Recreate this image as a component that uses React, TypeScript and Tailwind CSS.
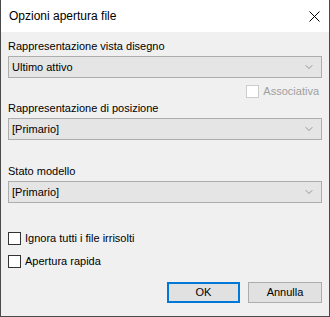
import { ChevronDown } from "lucide-react";

function Combo({ value }: { value: string }) {
  return (
    <div className="mt-[2px] flex h-[22px] items-center justify-between border border-[#adadad] bg-[#e5e5e5] pl-[3px] pr-[6px]">
      <span>{value}</span>
      <ChevronDown size={12} strokeWidth={1.2} className="text-[#606060]" />
    </div>
  );
}

function CheckBox({ label, disabled }: { label: string; disabled?: boolean }) {
  return (
    <div className="flex h-[15px] items-center">
      <div
        className={`h-[13px] w-[13px] border bg-white ${
          disabled ? "border-[#cccccc]" : "border-[#333333]"
        }`}
      />
      <span className={`ml-[4px] ${disabled ? "text-[#a0a0a0]" : ""}`}>
        {label}
      </span>
    </div>
  );
}

export default function App() {
  return (
    <div
      className="flex h-[317px] w-[330px] flex-col overflow-hidden border border-t-0 border-[#4a4a4a] bg-[#f0f0f0] text-[11px] leading-[15px] text-black"
      style={{ fontFamily: '"Liberation Sans", Arial, sans-serif' }}
    >
      {/* barra del titolo */}
      <div className="flex h-[32px] shrink-0 items-center justify-between bg-white pl-[8px] pr-[9px] text-[12px]">
        <span>Opzioni apertura file</span>
        <svg width="11" height="11" viewBox="0 0 11 11" className="text-black">
          <path d="M0.5 0.5 L10.5 10.5 M10.5 0.5 L0.5 10.5" stroke="currentColor" strokeWidth="1" />
        </svg>
      </div>

      <div className="flex flex-1 flex-col px-[7px]">
        <div className="mt-[7px]">Rappresentazione vista disegno</div>
        <Combo value="Ultimo attivo" />
        <div className="mt-[6px] flex justify-end pr-[3px]">
          <CheckBox label="Associativa" disabled />
        </div>

        <div className="mt-[2px]">Rappresentazione di posizione</div>
        <Combo value="[Primario]" />

        <div className="mt-[24px]">Stato modello</div>
        <Combo value="[Primario]" />

        <div className="mt-[28px] flex flex-col gap-[8px]">
          <CheckBox label="Ignora tutti i file irrisolti" />
          <CheckBox label="Apertura rapida" />
        </div>

        <div className="mt-[13px] flex justify-end gap-[8px]">
          <button className="h-[21px] w-[73px] border-2 border-[#0078d7] bg-[#e1e1e1]">
            OK
          </button>
          <button className="h-[21px] w-[74px] border border-[#adadad] bg-[#e1e1e1]">
            Annulla
          </button>
        </div>
      </div>
    </div>
  );
}
